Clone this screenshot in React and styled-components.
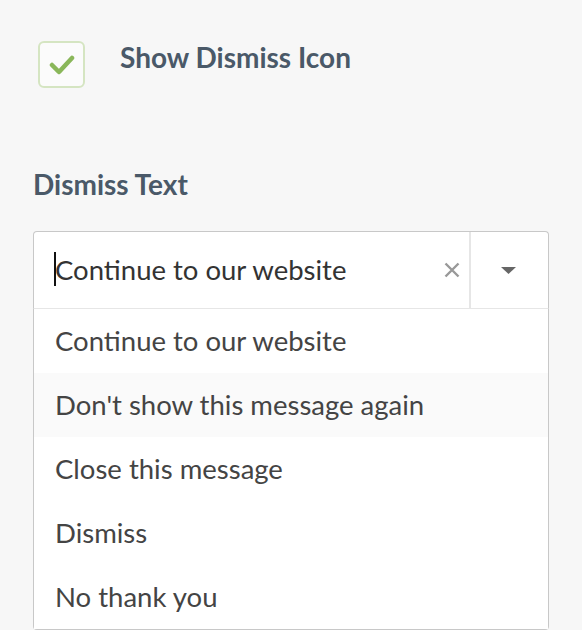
import React from 'react';
import styled, { createGlobalStyle } from 'styled-components';

const GlobalStyle = createGlobalStyle`
  body {
    margin: 0;
    background: #f7f7f7;
    font-family: Lato, "Liberation Sans", sans-serif;
  }
`

const Page = styled.div`
  padding: 41px 33px 0 33px;
  width: 516px;
`
const CheckRow = styled.label`
  display: flex;
  align-items: flex-start;
  gap: 35px;
  padding-left: 5px;
`
const Box = styled.span`
  box-sizing: border-box;
  width: 47px;
  height: 47px;
  border: 2px solid #d5e5c2;
  border-radius: 6px;
  background: #fbfbfb;
  display: flex;
  align-items: center;
  justify-content: center;
`
const CheckLabel = styled.span`
  font-size: 28px;
  line-height: 32px;
  font-weight: 700;
  color: #4a5968;
`
const FieldLabel = styled.div`
  margin-top: 80px;
  font-size: 28px;
  line-height: 32px;
  font-weight: 700;
  color: #4a5968;
`
const Select = styled.div`
  margin-top: 31px;
`
const Control = styled.div`
  box-sizing: border-box;
  height: 78px;
  display: flex;
  align-items: center;
  background: #fff;
  border: 1px solid #c8c8c8;
  border-bottom-color: #e6e6e6;
  border-radius: 4px 4px 0 0;
`
const Value = styled.div`
  flex: 1;
  padding-left: 21px;
  font-size: 27.5px;
  line-height: 32px;
  color: #333;
  position: relative;
`
const Caret = styled.span`
  position: absolute;
  left: 20px;
  top: -2px;
  width: 2px;
  height: 34px;
  background: #111;
`
const Clear = styled.span`
  width: 34px;
  height: 100%;
  display: flex;
  align-items: center;
  justify-content: center;
`
const Divider = styled.span`
  width: 2px;
  align-self: stretch;
  background: #e6e6e6;
`
const ArrowZone = styled.span`
  width: 77px;
  display: flex;
  align-items: center;
  justify-content: center;
  padding-right: 3px;
  box-sizing: border-box;
`
const Menu = styled.div`
  background: #fff;
  border: 1px solid #c8c8c8;
  border-top: none;
  border-radius: 0 0 4px 4px;
`
const Option = styled.div`
  padding: 16px 21px;
  font-size: 27.5px;
  line-height: 32px;
  color: #444;
  background: ${p => (p.$focused ? '#fafafa' : '#fff')};
`

const options = [
  'Continue to our website',
  "Don't show this message again",
  'Close this message',
  'Dismiss',
  'No thank you',
]

const App = () => {
  return (
    <Page>
      <GlobalStyle />
      <CheckRow>
        <Box>
          <svg width="26" height="22" viewBox="0 0 26 22">
            <polyline points="3,11 10,18 23,4" fill="none" stroke="#8ab75a" strokeWidth="4.5" strokeLinecap="round" strokeLinejoin="round" />
          </svg>
        </Box>
        <CheckLabel>Show Dismiss Icon</CheckLabel>
      </CheckRow>
      <FieldLabel>Dismiss Text</FieldLabel>
      <Select>
        <Control>
          <Value>
            <Caret />
            Continue to our website
          </Value>
          <Clear>
            <svg width="16" height="16" viewBox="0 0 16 16">
              <path d="M1.5 1.5 L14.5 14.5 M14.5 1.5 L1.5 14.5" stroke="#999" strokeWidth="2.4" />
            </svg>
          </Clear>
          <Divider />
          <ArrowZone>
            <svg width="15" height="7" viewBox="0 0 15 7">
              <polygon points="0,0 15,0 7.5,7" fill="#666" />
            </svg>
          </ArrowZone>
        </Control>
        <Menu>
          {options.map((o, i) => (
            <Option key={o} $focused={i === 1}>{o}</Option>
          ))}
        </Menu>
      </Select>
    </Page>
  );
};

export default App;
